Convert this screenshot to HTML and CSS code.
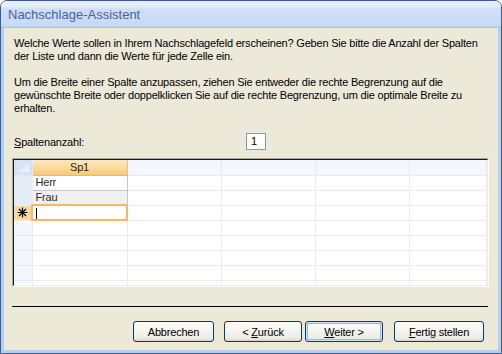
FILE: index.html
```html
<!DOCTYPE html>
<html lang="de">
<head>
    <meta charset="UTF-8">
    <title>Nachschlage-Assistent</title>
    <link rel="stylesheet" href="styles.css">
</head>
<body>

    <div class="window">
        <div class="titlebar">Nachschlage-Assistent</div>
        <div class="content">
            <p class="intro">Welche Werte sollen in Ihrem Nachschlagefeld erscheinen? Geben Sie bitte die Anzahl der Spalten der Liste und dann die Werte für jede Zelle ein.</p>
            <p class="intro second">Um die Breite einer Spalte anzupassen, ziehen Sie entweder die rechte Begrenzung auf die gewünschte Breite oder doppelklicken Sie auf die rechte Begrenzung, um die optimale Breite zu erhalten.</p>

            <div class="count-row">
                <label for="cols"><u>S</u>paltenanzahl:</label>
                <div class="count-box" id="cols">1</div>
            </div>

            <div class="grid-frame">
                <div class="grid-inner">
                    <table class="sheet">
                        <colgroup>
                            <col style="width:18px">
                            <col style="width:95px">
                            <col style="width:94px">
                            <col style="width:94px">
                            <col style="width:94px">
                            <col>
                        </colgroup>
                        <tr class="head">
                            <td class="sel corner">
                                <svg width="17" height="14" viewBox="0 0 17 14">
                                    <defs>
                                        <linearGradient id="tri" x1="0" y1="0" x2="1" y2="1">
                                            <stop offset="0" stop-color="#c9d6ec"/>
                                            <stop offset="1" stop-color="#f4f7fd"/>
                                        </linearGradient>
                                    </defs>
                                    <polygon points="3,12 15,12 15,2" fill="url(#tri)"/>
                                </svg>
                            </td>
                            <td class="col-active">Sp1</td>
                            <td></td><td></td><td></td><td></td>
                        </tr>
                        <tr>
                            <td class="sel"></td>
                            <td class="val">Herr</td>
                            <td></td><td></td><td></td><td></td>
                        </tr>
                        <tr>
                            <td class="sel"></td>
                            <td class="val alt">Frau</td>
                            <td></td><td></td><td></td><td></td>
                        </tr>
                        <tr>
                            <td class="sel new">
                                <svg width="11" height="11" viewBox="0 0 11 11">
                                    <g stroke="#000" stroke-width="1.2">
                                        <line x1="5.5" y1="0.5" x2="5.5" y2="10.5"/>
                                        <line x1="0.5" y1="5.5" x2="10.5" y2="5.5"/>
                                        <line x1="2" y1="2" x2="9" y2="9"/>
                                        <line x1="9" y1="2" x2="2" y2="9"/>
                                    </g>
                                </svg>
                            </td>
                            <td class="val current"><span class="caret"></span></td>
                            <td></td><td></td><td></td><td></td>
                        </tr>
                        <tr><td class="sel empty"></td><td></td><td></td><td></td><td></td><td></td></tr>
                        <tr><td class="sel empty"></td><td></td><td></td><td></td><td></td><td></td></tr>
                        <tr><td class="sel empty"></td><td></td><td></td><td></td><td></td><td></td></tr>
                        <tr><td class="sel empty"></td><td></td><td></td><td></td><td></td><td></td></tr>
                        <tr><td class="sel empty"></td><td></td><td></td><td></td><td></td><td></td></tr>
                    </table>
                </div>
            </div>

            <div class="separator"></div>

            <div class="buttons">
                <button class="btn btn-cancel">Abbrechen</button>
                <button class="btn btn-back">&lt; <u>Z</u>urück</button>
                <button class="btn btn-next default"><u>W</u>eiter &gt;</button>
                <button class="btn btn-finish"><u>F</u>ertig stellen</button>
            </div>
        </div>
    </div>

</body>
</html>
```

FILE: styles.css
```css
* {
    margin: 0;
    padding: 0;
    box-sizing: border-box;
    font-family: 'Liberation Sans', Arial, sans-serif;
}
body {
    width: 502px;
    height: 354px;
    overflow: hidden;
    background: #ffffff;
}
.window {
    width: 502px;
    height: 354px;
    display: flex;
    flex-direction: column;
    border: 1px solid #3c5a93;
    border-radius: 7px 7px 0 0;
    overflow: hidden;
}
.titlebar {
    height: 27px;
    padding: 6px 0 0 7px;
    font-size: 13px;
    color: #4a5ea8;
    background: linear-gradient(#e6effc 0, #e2ecfb 6px, #cfdff6 8px, #c8daf4 24px, #bcd3f2 26px);
    border-bottom: 1px solid #a5c3ec;
}
.content {
    flex: 1;
    display: flex;
    flex-direction: column;
    padding: 9px 9px 0 8px;
    background: #ece9d8;
    border: 3px solid #b6cff1;
    border-top: none;
    letter-spacing: -0.2px;
}
.intro {
    padding-left: 2px;
    font-size: 11px;
    line-height: 13px;
    color: #000;
}
.second {
    margin-top: 13px;
}
.count-row {
    display: flex;
    align-items: center;
    margin-top: 18px;
    padding-left: 2px;
    height: 17px;
}
.count-row label {
    width: 232px;
    font-size: 11px;
    color: #000;
}
.count-box {
    width: 20px;
    height: 17px;
    padding: 1px 0 0 4px;
    font-size: 11px;
    color: #000;
    background: #fff;
    border: 1px solid #7f9db9;
}
.grid-frame {
    margin-top: 8px;
    height: 129px;
    border: 1px solid;
    border-color: #aca899 #ffffff #ffffff #aca899;
}
.grid-inner {
    height: 100%;
    overflow: hidden;
    background: #fff;
    border: 1px solid;
    border-color: #1a1a1a #f1efe2 #f1efe2 #1a1a1a;
}
.sheet {
    width: 473px;
    table-layout: fixed;
    border-collapse: collapse;
}
.sheet tr {
    height: 15px;
}
.sheet td {
    height: 15px;
    padding: 0 3px;
    font-size: 11px;
    line-height: 13px;
    color: #2b2b2b;
    border-right: 1px solid #ebebeb;
    border-bottom: 1px solid #ebebeb;
    white-space: nowrap;
    overflow: hidden;
}
.head td {
    background: #f5f7fe;
    border-color: #e7eaf4;
}
.head td.col-active {
    text-align: center;
    color: #1f1f1f;
    background: linear-gradient(#fce8c2, #f9d795 60%, #f6c976);
    border-right: 1px solid #d9c39b;
    border-bottom: 1px solid #e0b977;
}
.sel {
    padding: 0;
    background: #e3ebf7;
    border-right: 1px solid #c5d2e6;
    border-bottom: 1px solid #c5d2e6;
}
.sel svg {
    display: block;
}
.sheet td.corner {
    padding: 0;
    background: #d7e2f4;
}
.sheet td.new {
    padding: 0 0 0 3px;
    background: #fbd9a0;
}
.sheet td.empty {
    background: #f5f7fe;
    border-color: #e6eaf4;
}
.sheet td.val {
    border-right-color: #c6c6c6;
    border-bottom-color: #c6c6c6;
}
.alt {
    background: #f0f0f0;
}
.current {
    outline: 2px solid #fbb65e;
    outline-offset: -1px;
}
.caret {
    display: inline-block;
    width: 1px;
    height: 11px;
    margin-top: 2px;
    background: #000;
    vertical-align: top;
}
.separator {
    margin-top: 19px;
    width: 476px;
    height: 1px;
    background: #000;
}
.buttons {
    display: flex;
    justify-content: flex-end;
    margin-top: 14px;
    padding-right: 5px;
}
.btn {
    height: 21px;
    font-size: 11px;
    letter-spacing: -0.2px;
    color: #000;
    border: 1px solid #003c74;
    border-radius: 3px;
    background: linear-gradient(#ffffff, #f4f3ee 50%, #ecebe5 85%, #d8d2c6);
    cursor: pointer;
}
.btn-cancel {
    width: 81px;
}
.btn-back {
    width: 78px;
    margin-left: 10px;
}
.btn-next {
    width: 78px;
    margin-left: 3px;
}
.btn-finish {
    width: 90px;
    margin-left: 11px;
}
.default {
    box-shadow: inset 0 0 0 1px #cee7ff, inset 0 0 0 2px #98b8ea;
}
```
